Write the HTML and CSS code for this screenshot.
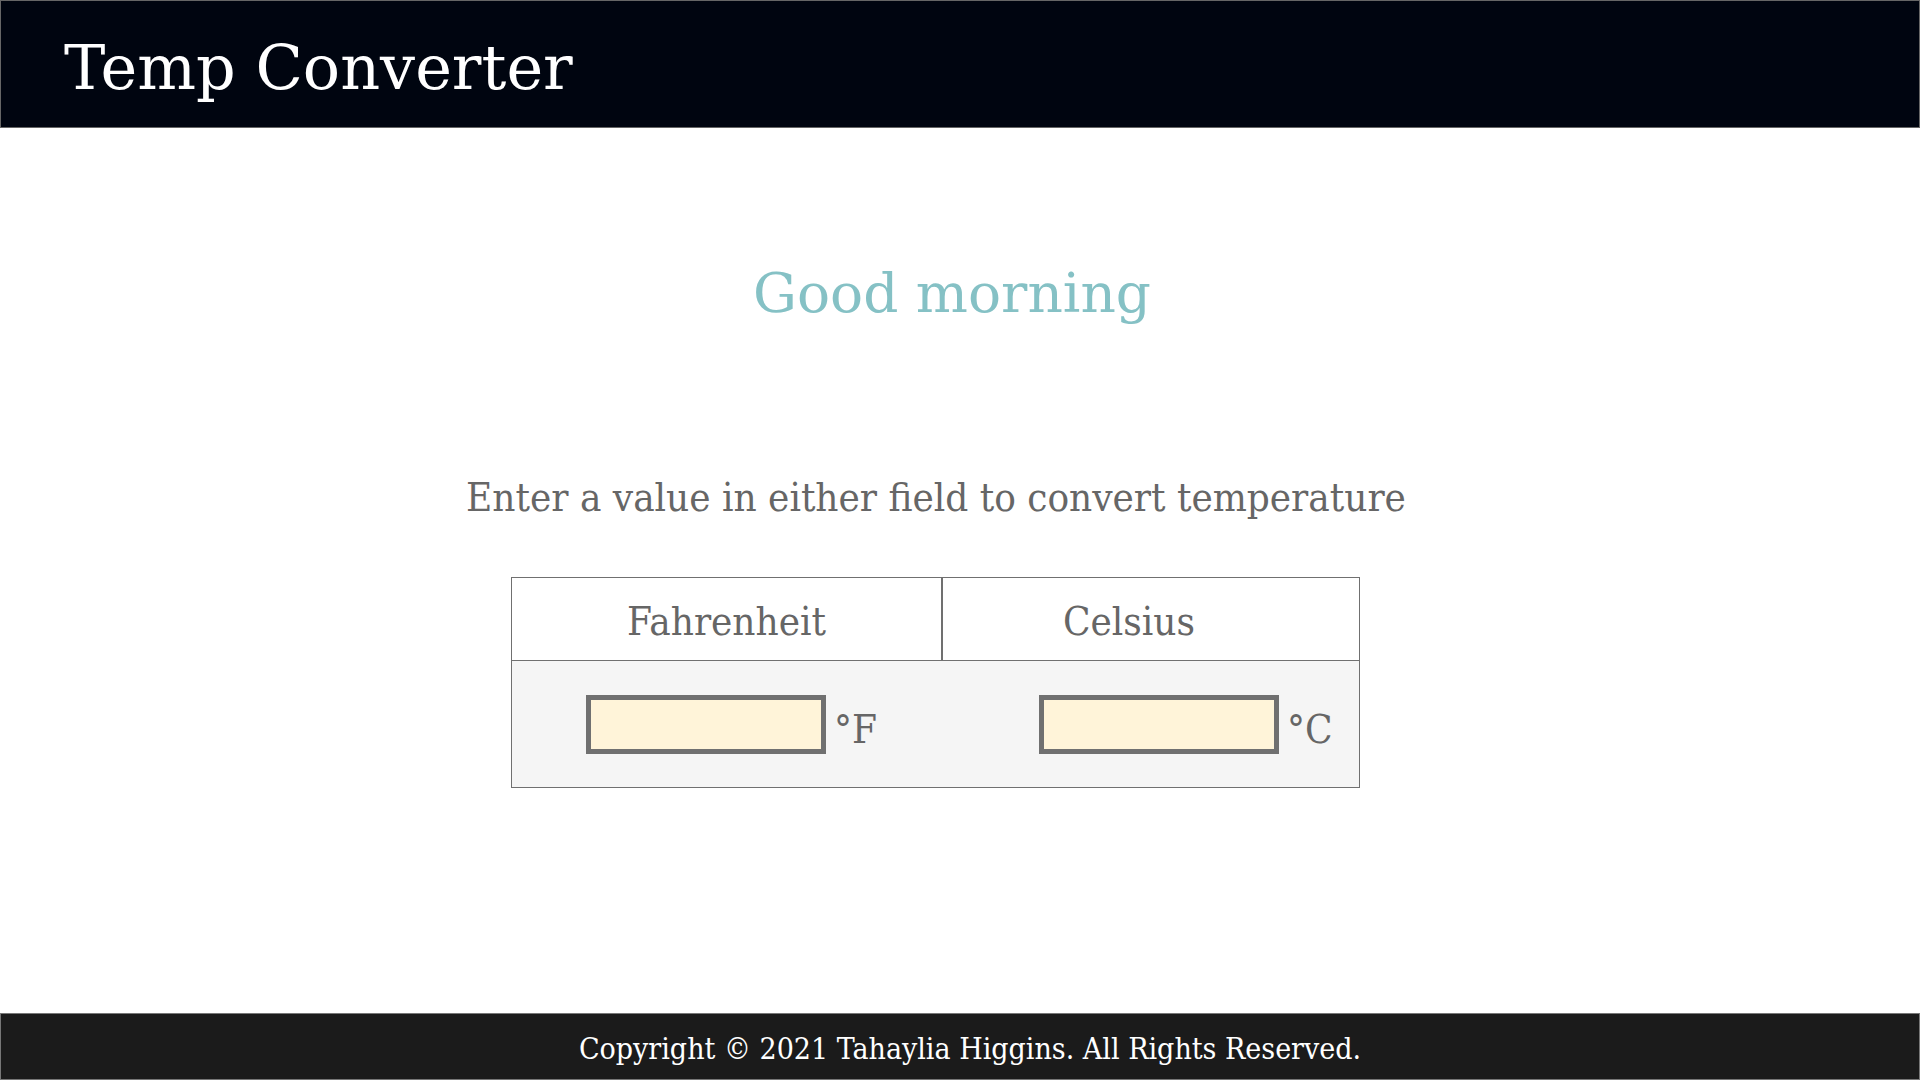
FILE: index.html
```html
<!DOCTYPE html>
<html lang="en">
<head>
<meta charset="utf-8">
<title>Temp Converter</title>
<link rel="stylesheet" href="styles.css">
</head>
<body>
<header class="topbar">
  <h1 class="brand">Temp Converter</h1>
</header>
<main class="content">
  <h2 class="greeting">Good morning</h2>
  <p class="intro">Enter a value in either field to convert temperature</p>
  <div class="converter">
    <div class="conv-head">
      <div class="head-cell head-f">Fahrenheit</div>
      <div class="head-cell head-c">Celsius</div>
    </div>
    <div class="conv-body">
      <div class="field field-f">
        <input class="temp-input" type="text" aria-label="Fahrenheit">
        <span class="unit">°F</span>
      </div>
      <div class="field field-c">
        <input class="temp-input" type="text" aria-label="Celsius">
        <span class="unit">°C</span>
      </div>
    </div>
  </div>
</main>
<footer class="footbar">
  <p class="copy">Copyright © 2021 Tahaylia Higgins. All Rights Reserved.</p>
</footer>
</body>
</html>
```
FILE: styles.css
```css
html, body {
  margin: 0;
  padding: 0;
  height: 100%;
}
body {
  display: flex;
  flex-direction: column;
  background: #ffffff;
  font-family: "DejaVu Serif", "Liberation Serif", serif;
  color: #666666;
}
.topbar {
  box-sizing: border-box;
  height: 128px;
  background: #000510;
  border: 1px solid #666666;
  display: flex;
  align-items: center;
  padding-left: 63px;
}
.brand {
  margin: 0;
  color: #ffffff;
  font-weight: normal;
  font-size: 62px;
  line-height: 1;
  padding-top: 8px;
}
.content {
  flex: 1;
  display: flex;
  flex-direction: column;
}
.greeting {
  margin: 0;
  padding-top: 138px;
  padding-right: 16px;
  text-align: center;
  font-weight: normal;
  color: #85c1c5;
  font-size: 55px;
  line-height: 1;
}
.intro {
  margin: 0;
  padding-top: 156px;
  padding-right: 48px;
  text-align: center;
  font-family: "DejaVu Serif Condensed", "DejaVu Serif", serif;
  font-stretch: condensed;
  font-size: 40px;
  line-height: 1;
  color: #666666;
}
.converter {
  margin-top: 60px;
  margin-left: 511px;
  width: 849px;
  box-sizing: border-box;
  border: 1px solid #707070;
}
.conv-head {
  display: flex;
  height: 82px;
  border-bottom: 1px solid #707070;
  background: #ffffff;
}
.head-cell {
  display: flex;
  align-items: center;
  justify-content: center;
  font-family: "DejaVu Serif Condensed", "DejaVu Serif", serif;
  font-stretch: condensed;
  font-size: 40px;
  color: #666666;
  padding-top: 4px;
  box-sizing: border-box;
}
.head-f {
  width: 431px;
  border-right: 2px solid #707070;
}
.head-c {
  flex: 1;
  padding-right: 44px;
}
.conv-body {
  display: flex;
  align-items: center;
  height: 126px;
  background: #f5f5f5;
  padding-left: 74px;
}
.field {
  display: flex;
  align-items: center;
}
.field-c {
  margin-left: 162px;
}
.temp-input {
  box-sizing: border-box;
  width: 240px;
  height: 59px;
  margin: 0;
  border: 5px solid #707070;
  background: #fff4d9;
  outline: none;
  font-family: "DejaVu Serif", serif;
  font-size: 24px;
  padding: 0 8px;
}
.unit {
  margin-left: 8px;
  font-family: "DejaVu Serif Condensed", "DejaVu Serif", serif;
  font-stretch: condensed;
  font-size: 40px;
  color: #666666;
  padding-top: 10px;
}
.footbar {
  box-sizing: border-box;
  height: 67px;
  background: #1b1b1b;
  border: 1px solid #777777;
  display: flex;
  align-items: center;
  justify-content: center;
  padding-left: 20px;
}
.copy {
  margin: 0;
  color: #ffffff;
  font-family: "DejaVu Serif Condensed", "DejaVu Serif", serif;
  font-stretch: condensed;
  font-size: 30px;
  line-height: 1;
  padding-top: 4px;
}
```
